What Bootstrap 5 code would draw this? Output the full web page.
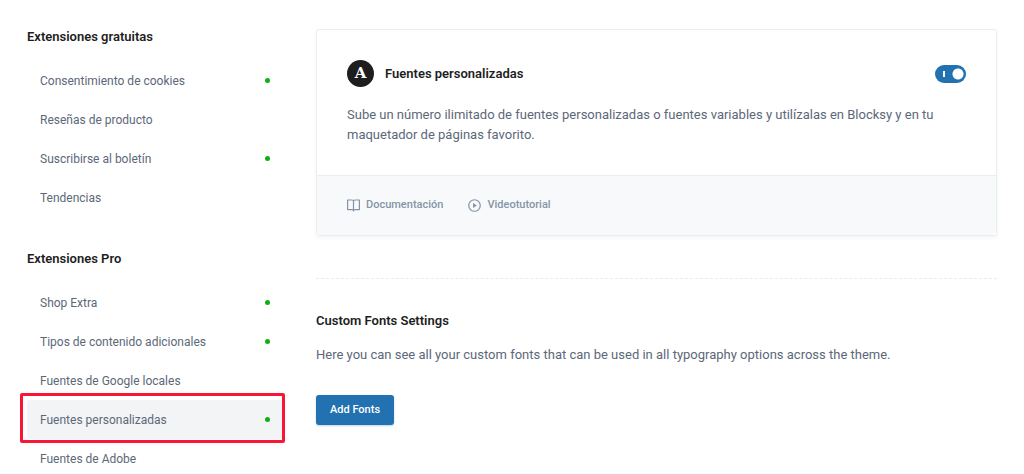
<!DOCTYPE html>
<html lang="es">
<head>
<meta charset="utf-8">
<meta name="viewport" content="width=device-width, initial-scale=1">
<title>Extensiones</title>
<link href="https://cdn.jsdelivr.net/npm/bootstrap@5.3.0/dist/css/bootstrap.min.css" rel="stylesheet">
<style>
  :root { --ink: #1e1e1e; --copy: #5c6879; --muted: #8595a7; --accent: #2271b1; }
  body { font-family: Roboto, "Liberation Sans", sans-serif; font-size: 13px; line-height: 20px; color: var(--copy); }
  .page { padding: 27px 27px 0; gap: 33px; }
  .side { width: 256px; }
  .title { font-size: 13px; line-height: 20px; font-weight: 600; color: var(--ink); margin: 0; }
  .side .title { margin-bottom: 14px; }
  .side section + section { margin-top: 32px; }
  .ext-link { height: 39px; padding: 0 13px; color: var(--copy); font-size: 12px; border-radius: 3px; }
  .ext-link:hover { color: var(--ink); }
  .ext-link.active { background: #f3f4f6; }
  .ext-link.on::after { content: ""; width: 5px; height: 5px; border-radius: 50%; background: #13ae13; }
  .marker { inset: -7px -2px -4px -7px; border: 3px solid #fb1535; border-radius: 2px; pointer-events: none; }
  .panel { margin-top: 2px; border: 1px solid #eaeef3; border-radius: 3px; box-shadow: 0 2px 4px rgba(60, 80, 110, .06); --bs-card-bg: #fff; }
  .panel .card-body { padding: 30px; }
  .panel .card-footer { padding: 19px 30px 20px; background: #f8f9fb; border-top: 1px solid #eaeef3; gap: 25px; }
  .panel-head { gap: 11px; margin-bottom: 18px; }
  .copy { margin: 0; }
  .title + .copy { margin-top: 14px; }
  .glyph { width: 27px; height: 27px; background: var(--ink); color: #fff; font: 700 15px/27px "DejaVu Serif", serif; }
  .form-switch { min-height: 0; }
  .form-switch .toggle, .form-switch .toggle:checked, .form-switch .toggle:focus { width: 31px; height: 18px; margin: 0; border: 0; background-color: var(--accent);
    background-image: linear-gradient(#fff, #fff), radial-gradient(circle, #fff 5px, transparent 6px);
    background-repeat: no-repeat; background-size: 2px 6px, 12px 12px; background-position: 8px 6px, 17px 3px; }
  .help { color: var(--muted); font-size: 11px; font-weight: 500; gap: 6px; }
  .divider { border-top: 1px dashed #e9ebee; margin: 42px 0 32px; }
  .add, .add:hover { background: var(--accent); color: #fff; }
  .add { font-size: 11px; font-weight: 500; line-height: 20px; padding: 5px 14px; border: 0; border-radius: 3px; margin-top: 30px; box-shadow: 0 1px 2px rgba(34, 113, 177, .3); }
</style>
</head>
<body class="vh-100 overflow-hidden bg-white">
<div class="page d-flex align-items-start">
  <aside class="side flex-shrink-0">
    <section>
      <h2 class="title">Extensiones gratuitas</h2>
      <nav class="nav flex-column" aria-label="Extensiones gratuitas">
        <a href="#" class="ext-link on d-flex align-items-center justify-content-between text-decoration-none">Consentimiento de cookies</a>
        <a href="#" class="ext-link d-flex align-items-center justify-content-between text-decoration-none">Reseñas de producto</a>
        <a href="#" class="ext-link on d-flex align-items-center justify-content-between text-decoration-none">Suscribirse al boletín</a>
        <a href="#" class="ext-link d-flex align-items-center justify-content-between text-decoration-none">Tendencias</a>
      </nav>
    </section>
    <section>
      <h2 class="title">Extensiones Pro</h2>
      <nav class="nav flex-column" aria-label="Extensiones Pro">
        <a href="#" class="ext-link on d-flex align-items-center justify-content-between text-decoration-none">Shop Extra</a>
        <a href="#" class="ext-link on d-flex align-items-center justify-content-between text-decoration-none">Tipos de contenido adicionales</a>
        <a href="#" class="ext-link d-flex align-items-center justify-content-between text-decoration-none">Fuentes de Google locales</a>
        <a href="#" class="ext-link on active position-relative d-flex align-items-center justify-content-between text-decoration-none" aria-current="page">Fuentes personalizadas<span class="marker position-absolute"></span></a>
        <a href="#" class="ext-link d-flex align-items-center justify-content-between text-decoration-none">Fuentes de Adobe</a>
      </nav>
    </section>
  </aside>

  <main class="flex-grow-1">
    <article class="card panel">
      <div class="card-body">
        <div class="panel-head d-flex align-items-center">
          <span class="glyph rounded-circle text-center flex-shrink-0" aria-hidden="true">A</span>
          <label class="title" for="fonts-toggle">Fuentes personalizadas</label>
          <div class="form-check form-switch ms-auto mb-0 p-0 d-flex">
            <input class="form-check-input toggle" type="checkbox" role="switch" id="fonts-toggle" checked>
          </div>
        </div>
        <p class="copy">Sube un número ilimitado de fuentes personalizadas o fuentes variables y utilízalas en Blocksy y en tu maquetador de páginas favorito.</p>
      </div>
      <div class="card-footer d-flex">
        <a href="#" class="help d-flex align-items-center text-decoration-none">
          <svg width="13" height="13" viewBox="0 0 13 13" fill="none" stroke="currentColor" stroke-width="1.2" stroke-linejoin="round" aria-hidden="true"><path d="M6.5 2.5C6.5 1.5 5.8 1 5 1H.6v9.6h4.6c.8 0 1.3.5 1.3 1.2 0-.7.5-1.2 1.3-1.2h4.6V1H8c-.8 0-1.5.5-1.5 1.5v10"/></svg>
          Documentación</a>
        <a href="#" class="help d-flex align-items-center text-decoration-none">
          <svg width="13" height="13" viewBox="0 0 14 14" fill="none" aria-hidden="true"><circle cx="7" cy="7" r="6.2" stroke="currentColor" stroke-width="1.3"/><path d="M5.4 4.3v5.4L9.6 7z" fill="currentColor"/></svg>
          Videotutorial</a>
      </div>
    </article>

    <div class="divider"></div>

    <section>
      <h2 class="title">Custom Fonts Settings</h2>
      <p class="copy">Here you can see all your custom fonts that can be used in all typography options across the theme.</p>
      <button type="button" class="btn add">Add Fonts</button>
    </section>
  </main>
</div>
<script src="https://cdn.jsdelivr.net/npm/bootstrap@5.3.0/dist/js/bootstrap.bundle.min.js"></script>
</body>
</html>
